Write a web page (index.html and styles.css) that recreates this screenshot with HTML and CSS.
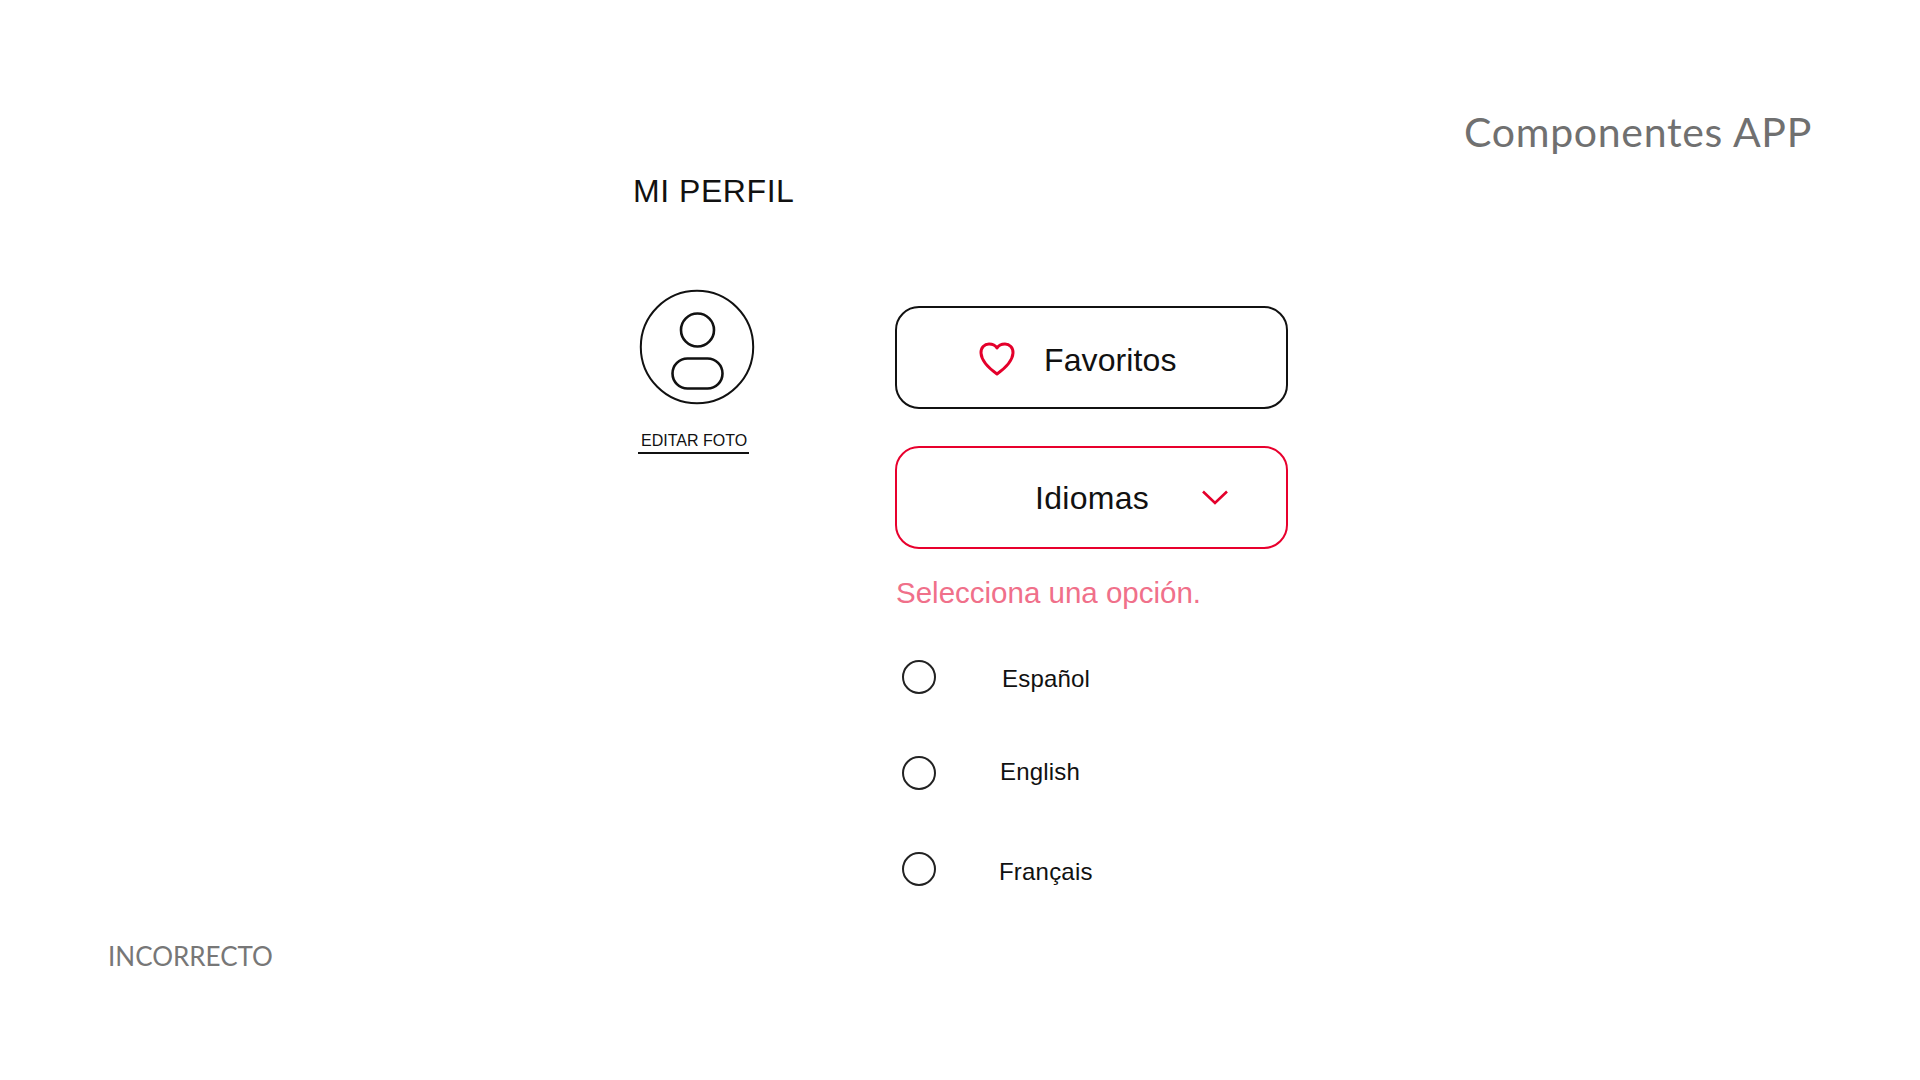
FILE: index.html
```html
<!DOCTYPE html>
<html lang="es">
<head>
<meta charset="utf-8">
<title>Componentes APP</title>
<link rel="stylesheet" href="styles.css">
</head>
<body>
<main class="page">
  <header class="app-title">Componentes APP</header>
  <section class="profile">
    <h1 class="profile-title">MI PERFIL</h1>
    <div class="profile-grid">
      <div class="photo">
        <svg class="avatar" width="116" height="116" viewBox="0 0 116 116" fill="none" stroke="#111">
          <circle cx="58" cy="58" r="56.2" stroke-width="2"/>
          <circle cx="58.5" cy="41" r="16.5" stroke-width="2.6"/>
          <rect x="33.5" y="69.5" width="50" height="30" rx="15" stroke-width="2.6"/>
        </svg>
        <a class="edit-photo">EDITAR FOTO</a>
      </div>
      <div class="form">
        <button class="box box-fav">
          <svg class="heart" width="38" height="34" viewBox="0 0 38 34" fill="none" stroke="#e4002b" stroke-width="3" stroke-linejoin="round">
            <path d="M19 32C12 27 3.500 20 3 11C2.700 5.500 6.500 2 11 2C14.500 2 17.500 3.500 19 6C20.500 3.500 23.500 2 27 2C31.500 2 35.300 5.500 35 11C34.500 20 26 27 19 32Z"/>
          </svg>
          <span class="box-text-fav">Favoritos</span>
        </button>
        <button class="box box-lang">
          <span>Idiomas</span>
          <svg width="26" height="15" viewBox="0 0 26 15" fill="none" stroke="#e4002b" stroke-width="2.600">
            <path d="M1 1.500L13 13L25 1.500"/>
          </svg>
        </button>
        <p class="hint">Selecciona una opción.</p>
        <ul class="options">
          <li class="option option-es"><span class="radio"></span><span class="label">Español</span></li>
          <li class="option option-en"><span class="radio"></span><span class="label">English</span></li>
          <li class="option option-fr"><span class="radio"></span><span class="label">Français</span></li>
        </ul>
      </div>
    </div>
  </section>
  <footer class="note">INCORRECTO</footer>
</main>
</body>
</html>
```

FILE: styles.css
```css
* { box-sizing: border-box; }
html, body { margin: 0; padding: 0; background: #fff; }
body { font-family: "Liberation Sans", Arial, sans-serif; color: #111; }

.page {
  width: 1920px;
  height: 1080px;
  display: flex;
  flex-direction: column;
  overflow: hidden;
}

.app-title {
  align-self: flex-end;
  margin: 107px 108px 0 0;
  font: 400 41px/50px Lato, "Open Sans", sans-serif;
  color: #707070;
  letter-spacing: 0.7px;
}

.profile { margin: 14px 0 0 633px; }

.profile-title {
  margin: 0;
  font-size: 32px;
  font-weight: 400;
  line-height: 40px;
  letter-spacing: 0.55px;
}

.profile-grid {
  display: grid;
  grid-template-columns: 262px 393px;
  margin-top: 78px;
}

.photo {
  display: flex;
  flex-direction: column;
  align-items: flex-start;
  padding-left: 5px;
}
.avatar { display: block; margin-left: 1px; }
.edit-photo {
  margin-top: 25px;
  padding: 0 2px 0 3px;
  font-size: 16px;
  line-height: 22px;
  border-bottom: 2px solid #111;
}

.form { padding-top: 17px; }

.box {
  display: flex;
  align-items: center;
  width: 393px;
  height: 103px;
  padding: 0;
  background: #fff;
  border: 2px solid #111;
  border-radius: 24px;
  font: 400 32px/40px "Liberation Sans", Arial, sans-serif;
  color: #111;
}
.box-fav { padding-left: 81px; gap: 28px; }
.box-text-fav { margin-top: 5px; letter-spacing: 0.1px; }
.box-lang {
  margin-top: 37px;
  padding-left: 138px;
  gap: 53px;
  border-color: #e8002d;
  letter-spacing: 0.3px;
}
.heart { display: block; flex: none; margin-top: 2px; }

.hint {
  margin: 26px 0 0 1px;
  font-size: 29.5px;
  line-height: 36px;
  color: #f0708a;
}

.options {
  list-style: none;
  margin: 49px 0 0;
  padding: 0;
}
.option {
  display: flex;
  align-items: flex-start;
  height: 96px;
  padding-left: 7px;
}
.option:last-child { height: auto; }
.radio {
  width: 34px;
  height: 34px;
  flex: none;
  border: 2px solid #222;
  border-radius: 50%;
}
.label { font-size: 24px; line-height: 30px; letter-spacing: 0.2px; }
.option-es .label { margin: 4px 0 0 66px; }
.option-en .label { margin: 1px 0 0 64px; }
.option-fr .label { margin: 5px 0 0 63px; }

.note {
  margin: auto 0 107px 108px;
  font: 400 26px/34px Lato, "Open Sans", sans-serif;
  color: #777;
}
```
